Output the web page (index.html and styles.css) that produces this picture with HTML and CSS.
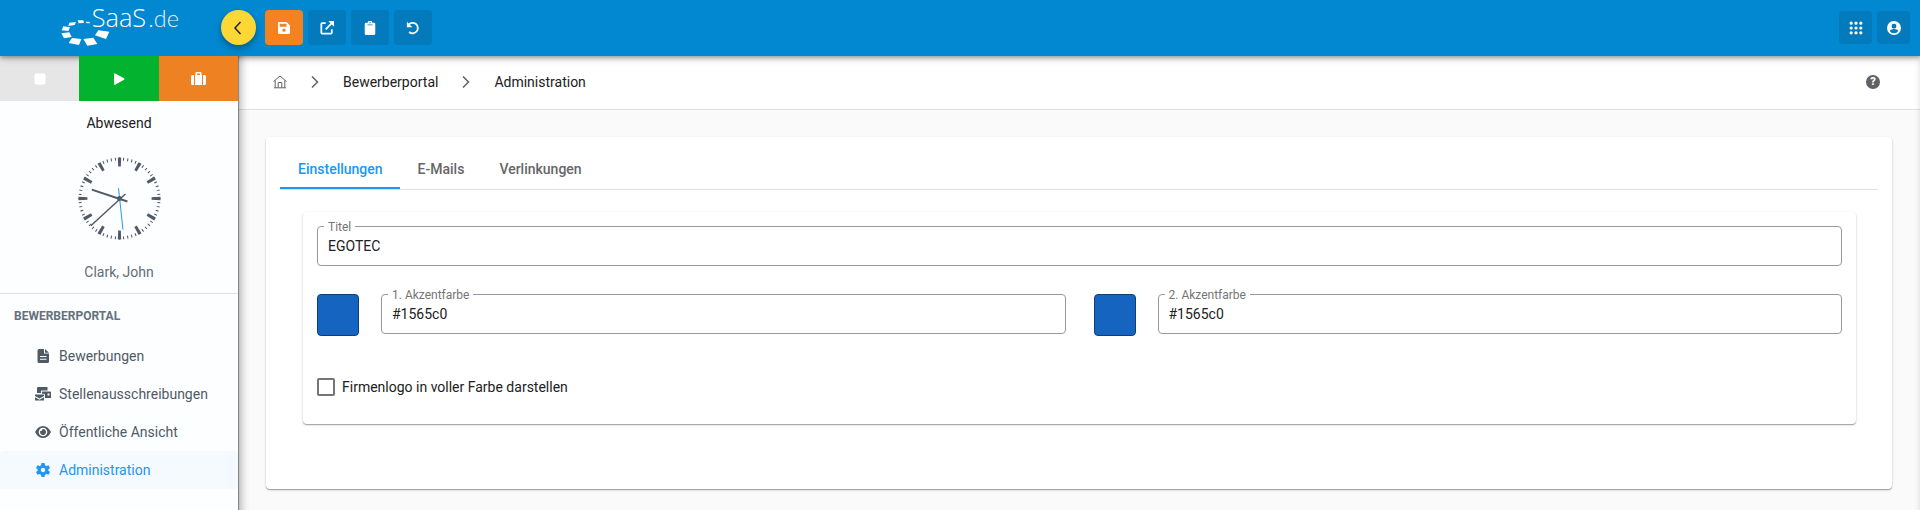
FILE: index.html
```html
<!DOCTYPE html>
<html lang="de">
<head>
<meta charset="utf-8">
<title>Bewerberportal – Administration</title>
<link rel="stylesheet" href="styles.css">
</head>
<body>
<header class="topbar">
  <a class="logo" href="#" aria-label="SaaS.de">
    <svg class="logo-mark" viewBox="180 20 360 120">
      <path d="M233 60L250 60L252 68L236 69ZM257 64L268 64L270 69L260 69ZM208 67L228 65L224 74L205 77ZM190 78L210 81L205 92L185 90ZM184 99L208 96L215 110L192 114ZM216 113L244 116L237 134L206 128ZM250 116L280 112L292 131L262 136ZM295 90L328 94L318 116L285 105Z"/>
      <text class="logo-name" x="275" y="80">SaaS</text>
      <text class="logo-tld" x="445" y="80">.de</text>
    </svg>
  </a>
  <button class="toggle" aria-label="Menü einklappen">
    <svg viewBox="0 0 16 16"><path class="line" d="M10.500 2L5 8L10.500 14"/></svg>
  </button>
  <div class="tools">
    <button class="tool tool-save" aria-label="Speichern">
      <svg viewBox="0 0 448 448"><path fill-rule="evenodd" d="M48 0H320L448 128V400Q448 448 400 448H48Q0 448 0 400V48Q0 0 48 0ZM64 64V176H320V64ZM224 240A64 64 0 1 0 224 368A64 64 0 1 0 224 240Z"/></svg>
    </button>
    <button class="tool" aria-label="In neuem Fenster öffnen">
      <svg viewBox="0 0 16 16"><path class="line thick" d="M6.500 2.500H2.500Q1.500 2.500 1.500 3.500V13.500Q1.500 14.500 2.500 14.500H12.500Q13.500 14.500 13.500 13.500V9.500M6.500 9.500L13.500 2.500"/><path d="M9.500 0H16V6.500Z"/></svg>
    </button>
    <button class="tool" aria-label="Zwischenablage">
      <svg viewBox="0 0 384 512"><path fill-rule="evenodd" d="M48 64H112A80 80 0 0 1 272 64H336Q384 64 384 112V464Q384 512 336 512H48Q0 512 0 464V112Q0 64 48 64ZM192 40A24 24 0 1 0 192 88A24 24 0 1 0 192 40ZM96 128V158H288V128Z"/></svg>
    </button>
    <button class="tool" aria-label="Rückgängig">
      <svg viewBox="0 0 16 16"><path class="line thick" d="M2.500 4.800A6 6 0 1 1 3.600 12.600"/><path d="M1 .8V7.200H7.400Z"/></svg>
    </button>
  </div>
  <div class="account">
    <button class="tool tool-small" aria-label="Apps">
      <svg viewBox="0 0 13 13"><path class="dots" d="M2 2h0M6.500 2h0M11 2h0M2 6.500h0M6.500 6.500h0M11 6.500h0M2 11h0M6.500 11h0M11 11h0"/></svg>
    </button>
    <button class="tool tool-small" aria-label="Konto">
      <svg viewBox="2 2 20 20"><path d="M12 2a10 10 0 1 0 0 20a10 10 0 1 0 0-20zm0 4a3.500 3.500 0 1 1 0 7a3.500 3.500 0 1 1 0-7zm0 13.500c-2.500 0-4.800-1.200-6-3.200c0-2 4-3 6-3s6 1 6 3c-1.200 2-3.500 3.200-6 3.200z"/></svg>
    </button>
  </div>
</header>
<div class="shell">
  <aside class="sidebar">
    <div class="status">
      <button class="status-stop" aria-label="Stopp"><svg viewBox="0 0 12 12"><rect x=".5" y=".5" width="11" height="11" rx="1.500"/></svg></button>
      <button class="status-play" aria-label="Start"><svg viewBox="0 0 12 12"><path d="M1 1Q1-.2 2.200.4L11 5.300Q12 6 11 6.700L2.200 11.700Q1 12.200 1 11Z"/></svg></button>
      <button class="status-trip" aria-label="Dienstreise"><svg class="case" viewBox="0 0 15 13"><path fill-rule="evenodd" d="M4 13V3H4.500V1.200Q4.500 0 5.700 0H9.300Q10.500 0 10.500 1.200V3H11V13ZM6 3H9V1.400H6ZM0 4.500Q0 3 1.500 3H3V13H1.500Q0 13 0 11.500ZM12 3H13.500Q15 3 15 4.500V11.500Q15 13 13.500 13H12Z"/></svg></button>
    </div>
    <div class="person">
      <p class="presence">Abwesend</p>
      <svg class="clock" viewBox="-42 -42 84 84" role="img" aria-label="Uhr">
        <circle class="minutes" r="40" pathLength="60"/>
        <circle class="hours" r="37" pathLength="12"/>
        <path class="hand-hour" d="M-28-9L8 3"/>
        <path class="hand-minute" d="M-29 27.500L6-4.500"/>
        <path class="hand-second" d="M-1-10.500L3.500 31.500"/>
        <circle class="pin" r="2.500"/>
      </svg>
      <p class="name">Clark, John</p>
    </div>
    <nav class="menu">
      <h2>Bewerberportal</h2>
      <a href="#"><svg viewBox="0 0 16 16"><path fill-rule="evenodd" d="M4 1H9V5.500H14V13.500Q14 15 12.500 15H4Q2.500 15 2.500 13.500V2.500Q2.500 1 4 1ZM10 1L14 4.700H10ZM5 8V9H11.500V8ZM5 10.800V11.800H11.500V10.800Z"/></svg>Bewerbungen</a>
      <a href="#"><svg viewBox="0 0 16 16"><path fill-rule="evenodd" d="M3 1H12.500V4.500H6V7H2V2Q2 1 3 1ZM7 5.500H15Q16 5.500 16 6.500V12H10V9Q10 7.800 8.800 7.800H7ZM12.500 7.500V9.500H14.500V7.500ZM0 8.500H9V10L4.500 12.500L0 10ZM0 11.200L4.500 13.700L9 11.200V14.500H0Z"/></svg>Stellenausschreibungen</a>
      <a href="#"><svg viewBox="0 0 16 16"><path fill-rule="evenodd" d="M8 2Q13 2 16 8Q13 14 8 14Q3 14 0 8Q3 2 8 2ZM8 3.700A4.300 4.300 0 1 0 8 12.300A4.300 4.300 0 1 0 8 3.700ZM8 5A3 3 0 1 1 5.200 7A1.500 1.500 0 0 0 7.200 5.200Z"/></svg>Öffentliche Ansicht</a>
      <a href="#" class="active"><svg viewBox="0 0 16 16"><path fill-rule="evenodd" d="M6.500 1H9.500L10 3.200L11.500 4L13.500 3.300L15 6L13.400 7.300V8.700L15 10L13.500 12.700L11.500 12L10 12.800L9.500 15H6.500L6 12.800L4.500 12L2.500 12.700L1 10L2.600 8.700V7.300L1 6L2.500 3.300L4.500 4L6 3.200ZM8 5.800A2.200 2.200 0 1 0 8 10.200A2.200 2.200 0 1 0 8 5.800Z"/></svg>Administration</a>
    </nav>
  </aside>
  <main class="main">
    <nav class="crumbs" aria-label="Brotkrumen">
      <a href="#" aria-label="Start"><svg class="home" viewBox="0 0 14 14"><path class="line" d="M.5 6.500L7 1L13.500 6.500M2.200 5.500V12.500M11.800 5.500V12.500M1 12.800H13M5.200 12.500V7.500H8.800V12.500"/></svg></a>
      <svg class="arrow" viewBox="0 0 8 14"><path class="line" d="M1 1.500L6.500 7L1 12.500"/></svg>
      <a href="#">Bewerberportal</a>
      <svg class="arrow" viewBox="0 0 8 14"><path class="line" d="M1 1.500L6.500 7L1 12.500"/></svg>
      <a href="#">Administration</a>
      <button class="help" aria-label="Hilfe">?</button>
    </nav>
    <section class="card">
      <div class="tabs" role="tablist">
        <button role="tab" class="selected" aria-selected="true">Einstellungen</button>
        <button role="tab">E-Mails</button>
        <button role="tab">Verlinkungen</button>
      </div>
      <form class="panel">
        <fieldset class="field">
          <legend><label for="title">Titel</label></legend>
          <input id="title" type="text" value="EGOTEC">
        </fieldset>
        <div class="colors">
          <div class="color">
            <button type="button" class="swatch" aria-label="1. Akzentfarbe wählen"></button>
            <fieldset class="field">
              <legend><label for="accent1">1. Akzentfarbe</label></legend>
              <input id="accent1" type="text" value="#1565c0">
            </fieldset>
          </div>
          <div class="color">
            <button type="button" class="swatch" aria-label="2. Akzentfarbe wählen"></button>
            <fieldset class="field">
              <legend><label for="accent2">2. Akzentfarbe</label></legend>
              <input id="accent2" type="text" value="#1565c0">
            </fieldset>
          </div>
        </div>
        <label class="check"><input type="checkbox">Firmenlogo in voller Farbe darstellen</label>
      </form>
    </section>
  </main>
</div>
</body>
</html>
```
FILE: styles.css
```css
* { box-sizing: border-box; }
body {
  margin: 0;
  min-height: 100vh;
  display: flex;
  flex-direction: column;
  font: 14px/20px Roboto, sans-serif;
  color: #212121;
  background: #fafafa;
}
button, input { font: inherit; color: inherit; }
button { border: 0; padding: 0; cursor: pointer; }
a { color: inherit; text-decoration: none; }
p, h2 { margin: 0; }
svg { display: block; fill: currentColor; }
.line { fill: none; stroke: currentColor; }
.thick { stroke-width: 2; }

.topbar {
  position: relative;
  z-index: 2;
  display: flex;
  align-items: center;
  height: 56px;
  padding: 0 10px 1px 0;
  background: #0288d1;
  box-shadow: 0 2px 4px rgba(0, 0, 0, .3), 0 1px 10px rgba(0, 0, 0, .2);
  color: #fff;
}
.logo { width: 221px; padding: 0 0 1px 60px; }
.logo-mark { width: 120px; height: 40px; overflow: visible; }
.logo-name { font: 300 76px "Open Sans", sans-serif; }
.logo-tld { font: 300 70px Lato, sans-serif; opacity: .9; }
.toggle {
  display: grid;
  place-items: center;
  width: 35px;
  height: 35px;
  border-radius: 50%;
  background: #fdd835;
  color: #212121;
  box-shadow: 0 3px 5px rgba(0, 0, 0, .2), 0 4px 10px rgba(0, 0, 0, .15);
}
.toggle svg { width: 16px; height: 16px; margin-right: 2px; stroke-width: 1.5; }
.tools, .account { display: flex; gap: 5px; }
.tools { margin-left: 9px; }
.account { margin-left: auto; }
.tool {
  display: grid;
  place-items: center;
  width: 38px;
  height: 35px;
  border-radius: 4px;
  background: #027abc;
  color: #fff;
}
.tool svg { width: 14px; height: 14px; }
.tool-save { background: #f58220; }
.tool-save svg { width: 12px; height: 12px; }
.tool-small { width: 33px; height: 33px; }
.dots { fill: none; stroke: currentColor; stroke-width: 3; stroke-linecap: round; }

.shell { flex: 1; display: flex; }
.sidebar {
  width: 238px;
  flex: none;
  background: #fdfeff;
}
.status { display: grid; grid-template-columns: 79px 80px 79px; height: 45px; }
.status button { display: grid; place-items: center; color: #fff; }
.status svg { width: 12px; height: 12px; }
.status .case { width: 15px; height: 13px; }
.status-stop { background: #e6e6e6; }
.status-play, .status-trip { position: relative; z-index: 3; }
.status-play { background: #03b32f; }
.status-trip { background: #ee8222; }
.person {
  display: flex;
  flex-direction: column;
  align-items: center;
  padding: 12px 0 11px;
  border-bottom: 1px solid #dfe1e4;
}
.presence { color: #212121; }
.clock { width: 83px; height: 83px; margin: 24px 0 22px; }
.clock circle { fill: none; stroke: #505a64; }
.clock .minutes { stroke-width: 3; stroke-dasharray: .25 .75; stroke-dashoffset: .125; }
.clock .hours { stroke-width: 9; stroke-dasharray: .16 .84; stroke-dashoffset: .08; }
.clock path { stroke: #505a64; }
.clock .pin { fill: #505a64; stroke: none; }
.clock .hand-hour { stroke-width: 2; }
.clock .hand-minute { stroke-width: 1.5; }
.clock .hand-second { stroke: #2196f3; }
.name { color: #626c76; }
.menu h2 {
  padding: 12px 14px 11px;
  font-size: 12px;
  line-height: 20px;
  font-weight: 700;
  text-transform: uppercase;
  color: #66717c;
}
.menu { color: #505a64; }
.menu a {
  display: flex;
  align-items: center;
  gap: 8px;
  height: 38px;
  padding-left: 35px;
  border-radius: 4px;
}
.menu svg { width: 16px; height: 16px; }
.menu .active { background: #f4faff; color: #2196f3; }

.main { position: relative; flex: 1; min-width: 0; overflow: hidden; }
.main::after {
  content: "";
  position: absolute;
  inset: -12px 0;
  pointer-events: none;
  box-shadow: inset 1px 0 1px rgba(0, 0, 0, .35), inset 3px 0 9px rgba(0, 0, 0, .3);
}
.crumbs {
  display: flex;
  align-items: center;
  gap: 24px;
  height: 54px;
  padding: 0 40px 2px 35px;
  border-bottom: 1px solid #e0e0e0;
  background: #fff;
}
.crumbs svg { color: #616161; }
.home { width: 14px; height: 14px; }
.arrow { width: 8px; height: 14px; stroke-width: 1.5; }
.help {
  width: 14px;
  height: 14px;
  margin-left: auto;
  border-radius: 50%;
  background: #616161;
  color: #fff;
  font-size: 11px;
  line-height: 14px;
  font-weight: 900;
}
.card, .panel {
  border-radius: 4px;
  background: #fff;
  box-shadow: 0 1px 1px rgba(0, 0, 0, .3), 0 1px 3px rgba(0, 0, 0, .14);
}
.card { margin: 27px 28px 20px; padding: 14px 14px 65px; }
.tabs { display: flex; border-bottom: 1px solid #e0e0e0; }
.tabs button {
  height: 38px;
  padding: 0 17px 0 18px;
  border-bottom: 2px solid transparent;
  background: none;
  font-weight: 500;
  color: #666;
}
.tabs .selected { border-color: #2196f3; color: #2196f3; }
.panel { margin: 22px 22px 0 23px; padding: 6px 14px 27px; }
.field {
  flex: 1;
  min-width: 0;
  margin: 0;
  padding: 0 10px;
  border: 1px solid #999;
  border-radius: 4px;
}
.field legend {
  margin-left: -4px;
  padding: 2px 4px 0;
  font-size: 12px;
  line-height: 14px;
  color: #757575;
}
.field input {
  display: block;
  width: 100%;
  height: 31px;
  padding: 0 0 7px;
  border: 0;
  outline: 0;
  background: none;
}
.colors { display: grid; grid-template-columns: 1fr 1fr; gap: 28px; margin-top: 20px; }
.color { display: flex; gap: 22px; align-items: flex-end; }
.swatch {
  width: 42px;
  height: 42px;
  border: 1px solid #0d3f78;
  border-radius: 4px;
  background: #1565c0;
}
.color .field { margin-bottom: 2px; }
.check { display: flex; align-items: center; gap: 7px; margin-top: 41px; }
.check input {
  appearance: none;
  width: 18px;
  height: 18px;
  margin: 0;
  border: 2px solid #757575;
  border-radius: 2px;
}
```
